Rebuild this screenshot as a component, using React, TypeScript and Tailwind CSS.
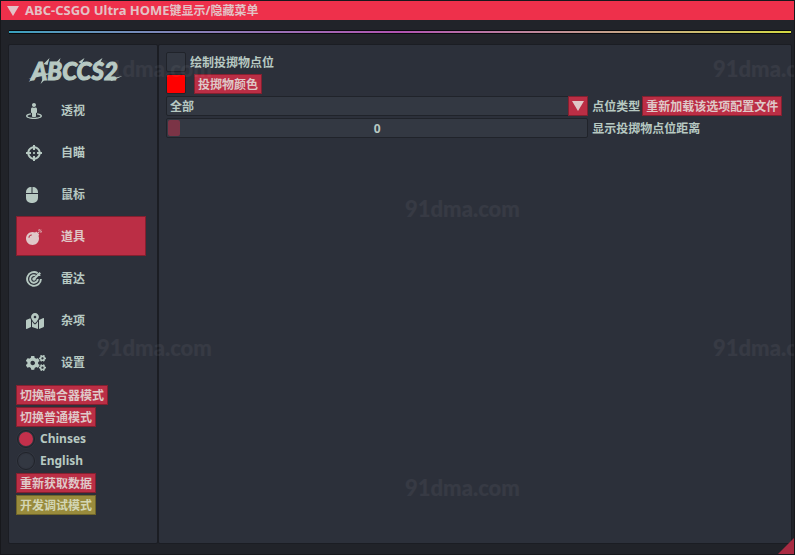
import React, { useState } from 'react';
import { FaBomb, FaCogs, FaCrosshairs, FaMapMarkedAlt, FaMouse, FaStreetView } from 'react-icons/fa';

const RadarIcon: React.FC<{ className?: string }> = ({ className }) => (
  <svg viewBox="0 0 16 16" fill="none" stroke="currentColor" strokeWidth="1.9" className={className}>
    <path d="M11.6 2.1A6.9 6.9 0 1 0 14.9 8" />
    <path d="M9.6 4.5A3.8 3.8 0 1 0 11.8 8" />
    <path d="M8 8 14.2 1.8" strokeWidth="2.2" />
    <path d="M12 2.4v2h2.4" strokeWidth="1.2" />
    <circle cx="8" cy="8" r="0.8" />
  </svg>
);

const navItems = [
  { label: '透视', icon: FaStreetView, size: 'h-4 w-4' },
  { label: '自瞄', icon: FaCrosshairs, size: 'h-4 w-4' },
  { label: '鼠标', icon: FaMouse, size: 'h-4 w-3' },
  { label: '道具', icon: FaBomb, size: 'h-4 w-4' },
  { label: '雷达', icon: RadarIcon, size: 'h-4 w-4' },
  { label: '杂项', icon: FaMapMarkedAlt, size: 'h-4 w-[18px]' },
  { label: '设置', icon: FaCogs, size: 'h-4 w-5' },
];

const watermarks = [
  'left-[96px] top-[56px]',
  'left-[712px] top-[56px]',
  'left-[404px] top-[196px]',
  'left-[96px] top-[335px]',
  'left-[712px] top-[335px]',
  'left-[404px] top-[475px]',
];

const RedButton: React.FC<{ children: React.ReactNode }> = ({ children }) => (
  <button
    type="button"
    className="h-5 shrink-0 whitespace-nowrap border border-[#84202f] bg-[#bb2e45] px-[3px] pt-0.5 leading-4 text-[#dfc8c8]"
  >
    {children}
  </button>
);

const App: React.FC = () => {
  const [active, setActive] = useState('道具');
  const [language, setLanguage] = useState('Chinses');
  const [distance, setDistance] = useState(0);

  return (
    <div className="relative flex min-h-screen flex-col overflow-hidden border border-[#17181c] bg-[#212329] font-['Noto_Sans','Noto_Sans_CJK_SC',sans-serif] text-xs font-bold text-[#b7c9c2]">
      <header className="flex h-[19px] items-center gap-1.5 bg-[#ee304b] pl-1.5 text-[#e3c2c6]">
        <svg viewBox="0 0 12 10" className="h-2.5 w-3" fill="currentColor">
          <path d="M0 0h12L6 10z" />
        </svg>
        <h1 className="whitespace-nowrap leading-4">
          <span className="text-[13px]">ABC-CSGO Ultra HOME</span>键显示/隐藏菜单
        </h1>
      </header>

      <div className="ml-2 mr-[3px] mt-2.5 h-1 border-y border-[#08090c] bg-linear-to-r from-[#36a0bd] via-[#b052b0] to-[#d2d83e]" />

      <div className="mb-2.5 ml-[7px] mr-0.5 mt-2.5 flex flex-1">
        <aside className="w-[150px] shrink-0 rounded-xs border border-[#1b1d23] bg-[#2c303a] pl-[7px] pr-2 pt-2">
          <svg viewBox="0 0 132 36" className="h-9 w-full" role="img" aria-label="ABCCS2">
            <text
              x="15"
              y="27"
              fill="currentColor"
              stroke="currentColor"
              strokeWidth="1"
              className="font-['Lato'] text-2xl font-black italic"
            >
              ABCCS2
            </text>
            <path
              d="M12 26 22 21 38 20 26 23zM24 31 29 19 28 27zM27 11 33 5 31 12zM39 10 44 5 42 12zM62 9 68 5 65 11zM80 9 86 5 83 11zM93 26 106 23 95 28zM12 29 17 24 18 26z"
              fill="currentColor"
            />
          </svg>

          <nav className="flex flex-col gap-0.5 py-px">
            {navItems.map(({ label, icon: Icon, size }) => (
              <button
                key={label}
                type="button"
                onClick={() => setActive(label)}
                className={
                  active === label
                    ? 'mr-[3px] flex h-10 items-center border border-[#84202f] bg-[#bb2e45] pl-[9px] text-[#dfc8c8]'
                    : 'mr-[3px] flex h-10 items-center border border-transparent pl-[9px]'
                }
              >
                <span className="w-[35px] pt-0.5">
                  <Icon className={size} />
                </span>
                <span className="pt-0.5">{label}</span>
              </button>
            ))}
          </nav>

          <div className="flex flex-col items-start gap-0.5 pt-0.5">
            <RedButton>切换融合器模式</RedButton>
            <RedButton>切换普通模式</RedButton>
            {['Chinses', 'English'].map((name) => (
              <label key={name} className="flex h-5 items-center gap-1">
                <input
                  type="radio"
                  name="language"
                  checked={language === name}
                  onChange={() => setLanguage(name)}
                  className="size-5 appearance-none rounded-full border-3 border-[#31353f] bg-[#333842] outline outline-offset-[-2px] outline-[#20232a] checked:bg-[#c3304b]"
                />
                {name}
              </label>
            ))}
            <RedButton>重新获取数据</RedButton>
            <button
              type="button"
              className="h-5 border border-[#6f652a] bg-[#998b3c] px-[3px] pt-0.5 leading-4 text-[#d3d6b4]"
            >
              开发调试模式
            </button>
          </div>
        </aside>

        <main className="flex min-w-0 flex-1 flex-col gap-0.5 rounded-xs border border-[#1b1d23] bg-[#2c303a] py-[7px] pl-[7px] pr-1">
          <label className="flex h-5 items-center gap-1 self-start">
            <input
              type="checkbox"
              className="size-5 appearance-none rounded-xs border border-[#20232a] bg-[#333842] checked:bg-[#bb2e45]"
            />
            <span className="pt-0.5">绘制投掷物点位</span>
          </label>

          <div className="flex h-5 items-center gap-2">
            <input
              type="color"
              defaultValue="#ff0000"
              aria-label="投掷物颜色"
              className="size-5 appearance-none rounded-xs border border-[#20232a] [&::-webkit-color-swatch-wrapper]:p-0 [&::-webkit-color-swatch]:border-0"
            />
            <RedButton>投掷物颜色</RedButton>
          </div>

          <div className="flex h-5 items-center">
            <div className="relative h-5 w-[68%]">
              <select
                id="point-type"
                className="block h-5 w-full appearance-none rounded-xs border border-[#20232a] bg-[#333842] pl-[3px] pr-6 pt-0.5 leading-4"
              >
                <option>全部</option>
              </select>
              <span className="pointer-events-none absolute inset-y-0 right-0 flex w-5 items-center justify-center border border-[#84202f] bg-[#bb2e45] text-[#dfc8c8]">
                <svg viewBox="0 0 12 10" className="h-2.5 w-3" fill="currentColor">
                  <path d="M0 0h12L6 10z" />
                </svg>
              </span>
            </div>
            <label htmlFor="point-type" className="ml-1 mr-0.5 whitespace-nowrap pt-0.5">
              点位类型
            </label>
            <RedButton>重新加载该选项配置文件</RedButton>
          </div>

          <div className="flex h-5 items-center">
            <div className="relative h-5 w-[68%]">
              <input
                id="distance"
                type="range"
                min={0}
                max={1000}
                value={distance}
                onChange={(e) => setDistance(Number(e.target.value))}
                className="block h-5 w-full appearance-none rounded-xs border border-[#20232a] bg-[#333842] px-px [&::-webkit-slider-thumb]:h-4 [&::-webkit-slider-thumb]:w-3 [&::-webkit-slider-thumb]:appearance-none [&::-webkit-slider-thumb]:rounded-xs [&::-webkit-slider-thumb]:bg-[#7b3446]"
              />
              <output
                htmlFor="distance"
                className="pointer-events-none absolute inset-0 flex items-center justify-center pt-0.5"
              >
                {distance}
              </output>
            </div>
            <label htmlFor="distance" className="ml-1 whitespace-nowrap pt-0.5">
              显示投掷物点位距离
            </label>
          </div>
        </main>
      </div>

      {watermarks.map((position) => (
        <span
          key={position}
          aria-hidden="true"
          className={`pointer-events-none absolute font-['Lato',sans-serif] text-[22px] font-black leading-6 text-white/5 ${position}`}
        >
          91dma.com
        </span>
      ))}

      <svg viewBox="0 0 16 16" className="absolute bottom-0 right-0 size-4" fill="#a92b42">
        <path d="M16 0v16H0z" />
      </svg>
    </div>
  );
};

export default App;
